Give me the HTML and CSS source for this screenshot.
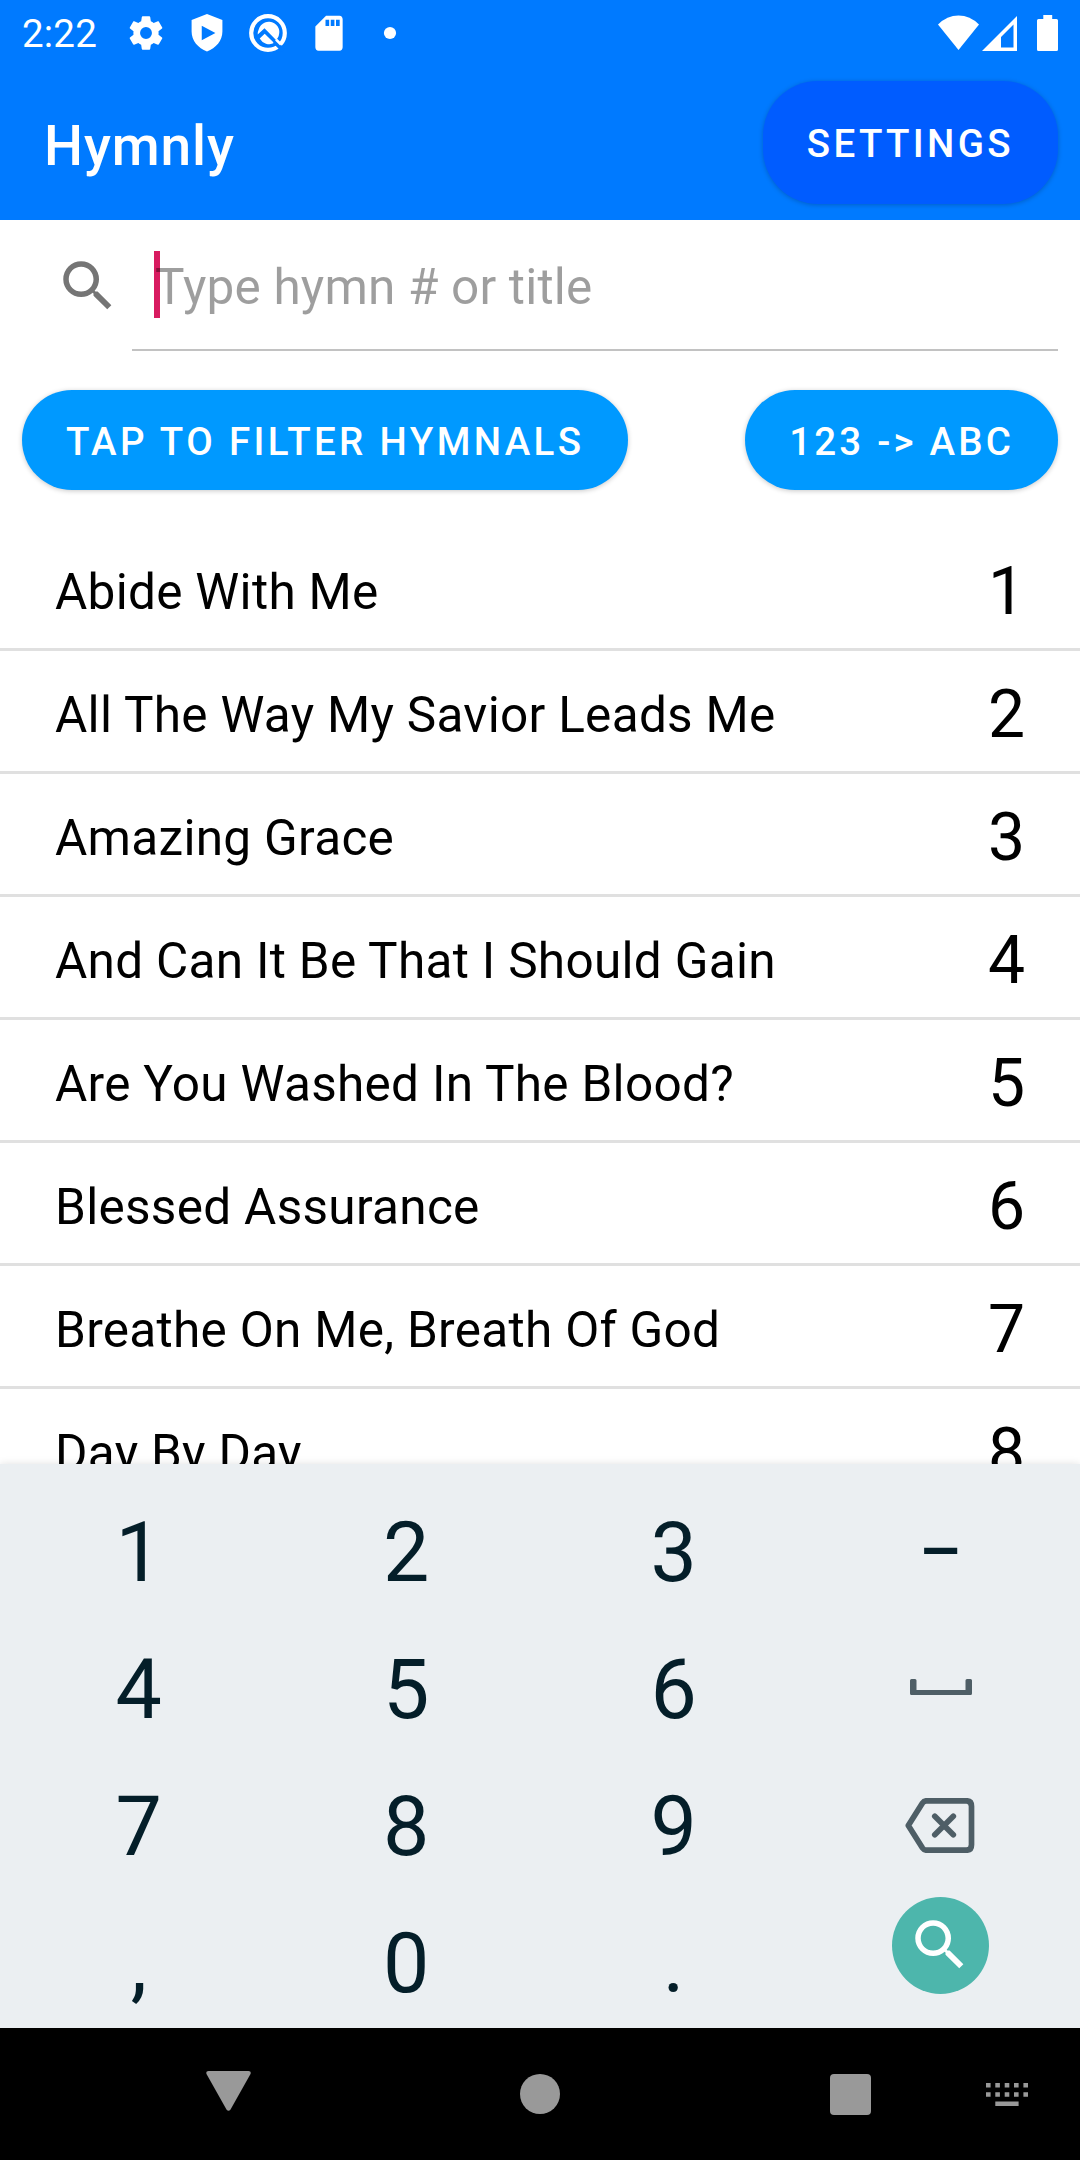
FILE: index.html
```html
<!DOCTYPE html>
<html lang="en">
<head>
<meta charset="utf-8">
<title>Hymnly</title>
<link rel="stylesheet" href="styles.css">
</head>
<body>
<div class="screen">
  <header class="top">
    <div class="status">
      <span class="clock">2:22</span>
      <div class="notifications">
        <svg class="status-icon" viewBox="0 0 24 24"><path fill-rule="evenodd" d="M19.14 12.94c.04-.3.06-.61.06-.94 0-.32-.02-.64-.07-.94l2.03-1.58c.18-.14.23-.41.12-.61l-1.92-3.32c-.12-.22-.37-.29-.59-.22l-2.39.96c-.5-.38-1.03-.7-1.62-.94L14.4 2.81c-.04-.24-.24-.41-.48-.41h-3.84c-.24 0-.43.17-.47.41L9.25 5.35c-.59.24-1.13.57-1.62.94l-2.39-.96c-.22-.08-.47 0-.59.22L2.74 8.87c-.12.21-.08.47.12.61l2.03 1.58c-.05.3-.09.63-.09.94s.02.64.07.94l-2.03 1.58c-.18.14-.23.41-.12.61l1.92 3.32c.12.22.37.29.59.22l2.39-.96c.5.38 1.03.7 1.62.94l.36 2.54c.05.24.24.41.48.41h3.84c.24 0 .44-.17.47-.41l.36-2.54c.59-.24 1.13-.56 1.62-.94l2.39.96c.22.08.47 0 .59-.22l1.92-3.32c.12-.22.07-.47-.12-.61zM12 15.4a3.4 3.4 0 1 1 0-6.8 3.4 3.4 0 0 1 0 6.8z"/></svg>
        <svg class="status-icon" viewBox="0 0 24 24"><path fill-rule="evenodd" d="M12 1.2 3.2 4.6v6.6c0 5.2 3.7 9.6 8.8 11.3 5.100-1.700 8.800-6.100 8.800-11.300V4.600zM9 7.800 16.800 12 9 16.200z"/></svg>
        <svg class="status-icon" viewBox="0 0 42 42"><circle cx="21" cy="21" r="16.800" fill="none" stroke="#fff" stroke-width="4.200"/><path d="M11.700 17.500a10.500 10.500 0 1 1 17.300 10.400L17.500 16.200l-6.800 6.300a10 10 0 0 1 1-5zM12.700 26.500l5-4.700 9.400 9.300a11 11 0 0 1-14.400-4.600z"/><path d="m27.500 29.500 9 9" stroke="#007aff" stroke-width="4.500"/><path d="m29 27.500 5 5" stroke="#fff" stroke-width="2.500"/></svg>
        <svg class="status-icon" viewBox="0 0 24 24"><path fill-rule="evenodd" d="M18 2.200h-7.700L4.200 8.300v11.900c0 1.100.7 2 1.800 2H18c1.100 0 1.800-.9 1.800-2v-16c0-1.100-.7-2-1.800-2zM10 4.400h2.100V8H10zm3 0h2.100V8H13zm3 0h2.100V8H16z"/></svg>
        <svg class="status-icon" viewBox="0 0 42 42"><circle cx="21" cy="21" r="6.100"/></svg>
      </div>
      <div class="system">
        <svg class="wifi" viewBox="0 0 41 35"><path d="M20.500 35 0 9.500Q9 .5 20.500.500T41 9.500z"/></svg>
        <svg class="signal" viewBox="0 0 35 35"><path fill-rule="evenodd" d="M35 0v35H0zM31.500 8.500 19 21v10.500h12.500z"/></svg>
        <svg class="battery" viewBox="0 0 21 36"><path d="M6.300 0h8.900v4H19.500q1.500 0 1.500 1.500v29q0 1.500-1.500 1.500h-18Q0 36 0 34.500v-29Q0 4 1.500 4h4.800z"/></svg>
      </div>
    </div>
    <div class="appbar">
      <h1 class="title">Hymnly</h1>
      <button class="btn btn-settings">SETTINGS</button>
    </div>
  </header>

  <main class="content">
    <div class="search">
      <svg class="search-icon" viewBox="0 0 24 24"><path d="M15.500 14h-.79l-.28-.27A6.471 6.471 0 0 0 16 9.500 6.500 6.500 0 1 0 9.500 16c1.610 0 3.090-.59 4.230-1.570l.27.28v.79l5 4.990L20.490 19l-4.990-5zm-6 0C7.010 14 5 11.990 5 9.500S7.010 5 9.500 5 14 7.010 14 9.500 11.990 14 9.500 14z"/></svg>
      <div class="field"><span class="caret"></span><span class="hint">Type hymn # or title</span></div>
    </div>
    <div class="actions">
      <button class="btn btn-filter">TAP TO FILTER HYMNALS</button>
      <button class="btn btn-mode">123 -&gt; ABC</button>
    </div>
    <ul class="hymns">
      <li class="hymn"><span class="name">Abide With Me</span><span class="num">1</span></li>
      <li class="hymn"><span class="name">All The Way My Savior Leads Me</span><span class="num">2</span></li>
      <li class="hymn"><span class="name">Amazing Grace</span><span class="num">3</span></li>
      <li class="hymn"><span class="name">And Can It Be That I Should Gain</span><span class="num">4</span></li>
      <li class="hymn"><span class="name">Are You Washed In The Blood?</span><span class="num">5</span></li>
      <li class="hymn"><span class="name">Blessed Assurance</span><span class="num">6</span></li>
      <li class="hymn"><span class="name">Breathe On Me, Breath Of God</span><span class="num">7</span></li>
      <li class="hymn"><span class="name">Day By Day</span><span class="num">8</span></li>
    </ul>
  </main>

  <section class="keyboard">
    <span class="key">1</span><span class="key">2</span><span class="key">3</span><span class="key"><span class="dash">–</span></span>
    <span class="key">4</span><span class="key">5</span><span class="key">6</span>
    <span class="key"><svg class="space" viewBox="0 0 62 16"><path d="M1.500 0H5Q6.500 0 6.500 1.500V11H55.500V1.500Q55.500 0 57 0H60.500Q62 0 62 1.500V14.500Q62 16 60.500 16H1.500Q0 16 0 14.500V1.500Q0 0 1.500 0z" fill="#4e5e66"/></svg></span>
    <span class="key">7</span><span class="key">8</span><span class="key">9</span>
    <span class="key"><svg class="erase" viewBox="0 0 70 55"><g fill="none" stroke="#4e5e66" stroke-width="5.700" stroke-linejoin="round"><path d="M21.500 2.800H61.500Q66.500 2.800 66.500 8.300V46.700Q66.500 52.200 61.500 52.200H21.500Q19 52.200 17.500 50L3.300 27.500 17.500 5Q19 2.800 21.500 2.800z"/><path d="M29.800 18.300 48.300 36.800M48.300 18.300 29.800 36.800" stroke-linecap="round"/></g></svg></span>
    <span class="key">,</span><span class="key">0</span><span class="key">.</span>
    <span class="key"><span class="go"><svg class="go-icon" viewBox="0 0 24 24"><path d="M15.500 14h-.79l-.28-.27A6.471 6.471 0 0 0 16 9.500 6.500 6.500 0 1 0 9.500 16c1.610 0 3.090-.59 4.230-1.570l.27.28v.79l5 4.990L20.490 19l-4.990-5zm-6 0C7.010 14 5 11.990 5 9.500S7.010 5 9.500 5 14 7.010 14 9.500 11.990 14 9.500 14z"/></svg></span></span>
  </section>

  <nav class="navbar">
    <svg class="nav-back" viewBox="0 0 45 40"><path d="M2.500 0h40q3 0 2 3L24.500 38.500q-2 2.500-4 0L.5 3q-1-3 2-3z"/></svg>
    <span class="nav-home"></span>
    <span class="nav-recent"></span>
    <svg class="nav-keyboard" viewBox="0 0 42 23"><path d="M0 0h4.600v4.600H0zM9.300 0h4.600v4.600H9.300zM18.700 0h4.600v4.600h-4.600zM28 0h4.600v4.600H28zM37.400 0H42v4.600h-4.600zM0 9.200h4.600v4.600H0zM9.300 9.200h4.600v4.600H9.300zM18.700 9.200h4.600v4.600h-4.600zM28 9.200h4.600v4.600H28zM37.400 9.200H42v4.600h-4.600zM9.300 18.400h23.300V23H9.300z"/></svg>
  </nav>
</div>
</body>
</html>
```
FILE: styles.css
```css
* { box-sizing: border-box; }

body {
  margin: 0;
  font-family: Roboto, "Liberation Sans", sans-serif;
  color: #000;
}

svg { display: block; flex: none; }

.screen {
  width: 1080px;
  height: 2160px;
  display: flex;
  flex-direction: column;
  background: #fff;
  overflow: hidden;
}

.top {
  height: 220px;
  flex: none;
  background: #007aff;
  color: #fff;
}

.status {
  height: 66px;
  display: flex;
  align-items: center;
  padding: 0 22px;
}

.clock {
  width: 103px;
  font-size: 38.5px;
  letter-spacing: 0.2px;
}

.notifications {
  display: flex;
  gap: 19px;
}

.status-icon {
  width: 42px;
  height: 42px;
  fill: #fff;
}

.system {
  display: flex;
  align-items: center;
  margin-left: auto;
  fill: #fff;
}

.wifi { width: 41px; height: 35px; margin-top: -2px; }
.signal { width: 35px; height: 35px; margin: 0 20px 0 3px; }
.battery { width: 21px; height: 36px; }

.appbar {
  height: 154px;
  display: flex;
  align-items: center;
  justify-content: space-between;
  padding: 0 22px 0 44px;
}

.title {
  margin: 5px 0 0;
  font-size: 55px;
  font-weight: 500;
  letter-spacing: 0.9px;
}

.btn {
  height: 100px;
  padding: 2px 44px 0;
  border: 0;
  border-radius: 50px;
  background: #0099ff;
  color: #fff;
  font: 500 38.5px Roboto, "Liberation Sans", sans-serif;
  letter-spacing: 3.35px;
  white-space: nowrap;
  box-shadow: 0 1px 5px rgba(0, 0, 0, 0.22);
}

.btn-settings {
  height: 123px;
  margin-bottom: 1px;
  border-radius: 55px;
  background: #005cff;
}

.btn-mode { letter-spacing: 3.2px; }

.content {
  height: 1244px;
  flex: none;
  overflow: hidden;
}

.search {
  height: 132px;
  display: flex;
  padding: 0 22px 0 55px;
}

.search-icon {
  width: 66px;
  height: 66px;
  margin: 33px 11px 0 0;
  fill: #757575;
}

.field {
  position: relative;
  flex: 1;
  height: 131px;
  padding: 31px 0 0 23px;
  border-bottom: 2px solid #c2c2c2;
}

.caret {
  position: absolute;
  left: 22px;
  top: 31px;
  width: 6px;
  height: 67px;
  background: #d81b60;
}

.hint {
  position: relative;
  font-size: 49.5px;
  line-height: 72px;
  letter-spacing: 0.17px;
  color: rgba(0, 0, 0, 0.38);
}

.actions {
  display: flex;
  justify-content: space-between;
  padding: 38px 22px;
}

.hymns {
  margin: 0;
  padding: 0;
  list-style: none;
}

.hymn {
  height: 123px;
  display: flex;
  align-items: center;
  justify-content: space-between;
  padding: 8px 55px 0;
  border-bottom: 3px solid #e0e0e0;
}

.name { font-size: 49.5px; letter-spacing: 0.3px; }
.num { font-size: 66px; margin-top: -1px; }

.keyboard {
  height: 564px;
  flex: none;
  display: grid;
  grid-template-columns: repeat(4, 267.5px);
  grid-auto-rows: 137px;
  padding: 20px 5px 0;
  background: #ebeff2;
  box-shadow: 0 0 8px rgba(0, 0, 0, 0.12);
  overflow: hidden;
}

.key {
  display: flex;
  align-items: center;
  justify-content: center;
  font-size: 82.5px;
  color: #041e29;
}

.dash { transform: scaleX(0.82); }
.space { width: 62px; height: 16px; margin-top: -6px; }
.erase { width: 70px; height: 55px; margin: -2px 0 0 -3px; }

.go {
  width: 97px;
  height: 97px;
  display: grid;
  place-items: center;
  margin: -37px 0 0 -2px;
  border-radius: 50%;
  background: #4db6ac;
}

.go-icon { width: 66px; height: 66px; fill: #fff; }

.navbar {
  height: 132px;
  flex: none;
  display: flex;
  align-items: center;
  padding: 0 52px 0 206px;
  background: #000;
  fill: #999;
}

.nav-back { width: 45px; height: 40px; margin: 0 269px 6px 0; }

.nav-home {
  width: 40px;
  height: 40px;
  border-radius: 50%;
  background: #999;
}

.nav-recent {
  width: 41px;
  height: 41px;
  margin: 1px 0 0 270px;
  border-radius: 4px;
  background: #999;
}

.nav-keyboard { width: 42px; height: 23px; margin-left: auto; }
```
